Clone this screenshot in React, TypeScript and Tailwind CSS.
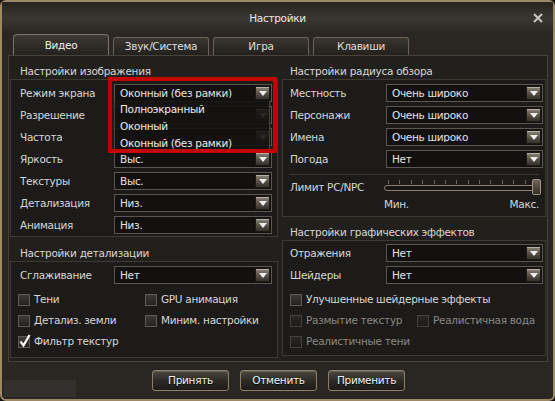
import React from 'react';

function Arrow() {
  return (
    <div className="w-[15px] h-[14px] mr-[1px] flex items-center justify-center border border-[#1c1a17] bg-gradient-to-b from-[#8e887b] via-[#5a5449] to-[#35312a] shadow-[inset_0_1px_0_rgba(255,255,255,0.35)]">
      <svg width="8" height="5" viewBox="0 0 8 5">
        <path d="M0 0 L8 0 L4 5 Z" fill="#eeeeee" />
      </svg>
    </div>
  );
}

function Select({ value, wide }: { value: string; wide?: boolean }) {
  return (
    <div
      className={
        wide
          ? 'w-[158px] h-[18px] flex items-center border border-[#5b574e] bg-[#121110]'
          : 'w-[157px] h-[18px] flex items-center border border-[#5b574e] bg-[#121110]'
      }
    >
      <span className="flex-1 pl-[5px] text-[#e4e4e4] whitespace-nowrap overflow-hidden">{value}</span>
      <Arrow />
    </div>
  );
}

function Row({ label, value, left }: { label: string; value: string; left?: boolean }) {
  return (
    <div className="h-[22px] flex items-center">
      <span className={left ? 'w-[94px] text-[#d6d6d6] whitespace-nowrap' : 'w-[96px] text-[#d6d6d6] whitespace-nowrap'}>{label}</span>
      <Select value={value} wide={left} />
    </div>
  );
}

function Check({ label, checked, disabled }: { label: string; checked?: boolean; disabled?: boolean }) {
  return (
    <div className="flex items-center gap-[4px] whitespace-nowrap">
      <div
        className={
          disabled
            ? 'relative shrink-0 w-[12px] h-[12px] border border-[#45423d] bg-gradient-to-b from-[#2a2825] to-[#1c1b19]'
            : 'relative shrink-0 w-[12px] h-[12px] border border-[#5e5b55] bg-gradient-to-b from-[#3c3a36] to-[#252320]'
        }
      >
        {checked && (
          <svg className="absolute left-[0px] top-[-3px]" width="12" height="14" viewBox="0 0 12 14">
            <path d="M1.5 7.5 L4.5 11.5 L10.5 1" stroke="#ffffff" strokeWidth="2.2" fill="none" />
          </svg>
        )}
      </div>
      <span className={disabled ? 'text-[#8a8883]' : 'text-[#d6d6d6]'}>{label}</span>
    </div>
  );
}

function Tab({ label, active }: { label: string; active?: boolean }) {
  return (
    <div
      className={
        active
          ? 'w-[96px] h-[22px] -mb-px flex items-center justify-center rounded-t-[4px] border border-b-0 border-[#7d7466] bg-gradient-to-b from-[#3c3832] to-[#24221f] text-[#eeeeee]'
          : 'w-[96px] h-[18px] flex items-center justify-center rounded-t-[3px] border border-b-0 border-[#6a6357] bg-gradient-to-b from-[#3a3630] to-[#23211d] text-[#dddddd]'
      }
    >
      {label}
    </div>
  );
}

function Btn({ label }: { label: string }) {
  return (
    <div className="w-[77px] h-[21px] flex items-center justify-center rounded-[3px] border border-[#8d7f67] bg-gradient-to-b from-[#4d4840] via-[#2e2b26] to-[#1e1c19] shadow-[inset_0_1px_0_rgba(255,255,255,0.15)] text-[#f2f2f2] [text-shadow:0_1px_1px_#000]">
      {label}
    </div>
  );
}

export default function App() {
  return (
    <div className="w-[555px] h-[401px] bg-[#15130f] overflow-hidden font-['DejaVu_Sans',sans-serif] text-[10.5px] tracking-[-0.3px] leading-none">
      <div className="relative w-full h-full border-2 border-[#9d8966] rounded-[6px] bg-[#2a2723] flex flex-col">
        {/* title */}
        <div className="relative h-[32px] flex items-center justify-center bg-gradient-to-b from-[#27241f] via-[#3a3630] to-[#2a2723] text-[#e8e8e8]">
          Настройки
          <svg className="absolute right-[10px] top-[11px]" width="10" height="10" viewBox="0 0 10 10">
            <path d="M1 1 L9 9 M9 1 L1 9" stroke="#c9c6c0" strokeWidth="2" />
          </svg>
        </div>

        {/* tabs */}
        <div className="h-[21px] flex items-end gap-[4px] pl-[11px]">
          <Tab label="Видео" active />
          <Tab label="Звук/Система" />
          <Tab label="Игра" />
          <Tab label="Клавиши" />
        </div>

        {/* content */}
        <div className="ml-[6px] w-[540px] h-[307px] border border-[#47423a] bg-[#22201d] flex gap-[4px] pl-[1px]">
          {/* left column */}
          <div className="w-[268px] flex flex-col">
            <div className="h-[23px] flex items-end pb-[3px] pl-[10px] text-[#d6d6d6]">Настройки изображения</div>
            <div className="relative h-[158px] border border-[#3d3a34] bg-[#1c1b19] pt-[2px] pl-[9px]">
              <Row left label="Режим экрана" value="Оконный (без рамки)" />
              <Row left label="Разрешение" value="" />
              <Row left label="Частота" value="" />
              <Row left label="Яркость" value="Выс." />
              <Row left label="Текстуры" value="Выс." />
              <Row left label="Детализация" value="Низ." />
              <Row left label="Анимация" value="Низ." />

              {/* open dropdown */}
              <div className="absolute left-[103px] top-[21px] w-[156px] h-[51px] border-x border-[#4a463f] bg-[#141311]/90 text-[#ececec]">
                <div className="h-[17px] flex items-center pl-[5px]">Полноэкранный</div>
                <div className="h-[17px] flex items-center pl-[5px]">Оконный</div>
                <div className="h-[17px] flex items-center pl-[5px]">Оконный (без рамки)</div>
              </div>
              {/* highlight */}
              <div className="absolute left-[97px] top-[-3px] w-[169px] h-[76px] border-[4px] border-[#c40000] rounded-[1px]" />
            </div>

            <div className="h-[24px] flex items-end pb-[3px] pl-[10px] text-[#d6d6d6]">Настройки детализации</div>
            <div className="h-[97px] border border-[#3d3a34] bg-[#1c1b19] pt-[2px] pl-[9px]">
              <Row left label="Сглаживание" value="Нет" />
              <div className="mt-[3px] -ml-[2px] grid grid-cols-[127px_1fr] auto-rows-[21px] items-center">
                <Check label="Тени" />
                <Check label="GPU анимация" />
                <Check label="Детализ. земли" />
                <Check label="Миним. настройки" />
                <Check label="Фильтр текстур" checked />
              </div>
            </div>
          </div>

          {/* right column */}
          <div className="w-[264px] flex flex-col">
            <div className="h-[23px] flex items-end pb-[3px] pl-[8px] text-[#d6d6d6]">Настройки радиуса обзора</div>
            <div className="h-[138px] border border-[#3d3a34] bg-[#1c1b19] pt-[2px] pl-[7px]">
              <Row label="Местность" value="Очень широко" />
              <Row label="Персонажи" value="Очень широко" />
              <Row label="Имена" value="Очень широко" />
              <Row label="Погода" value="Нет" />
              <div className="mt-[4px] mr-[6px] -ml-[1px] h-px bg-[#3a3731]" />
              <div className="mt-[4px] h-[16px] flex items-center">
                <span className="w-[94px] text-[#d6d6d6] whitespace-nowrap">Лимит PC/NPC</span>
                <div className="relative w-[157px] h-[16px] flex items-center">
                  <div className="absolute left-0 right-0 top-[1px] h-[4px] flex justify-between px-[4px]">
                    {Array.from({ length: 14 }).map((_, i) => (
                      <div key={i} className="w-px h-[4px] bg-[#6e675b]" />
                    ))}
                  </div>
                  <div className="w-full h-[6px] mt-[2px] rounded-full border border-[#8c806b] bg-[#171614]" />
                  <div className="absolute right-0 top-0 w-[9px] h-[16px] rounded-[2px] border border-[#a09480] bg-gradient-to-b from-[#6d665a] to-[#34302a]" />
                </div>
              </div>
              <div className="mt-[3px] h-[12px] flex items-center pl-[94px] pr-[6px] text-[#d6d6d6]">
                <span className="flex-1">Мин.</span>
                <span>Макс.</span>
              </div>
            </div>

            <div className="h-[23px] flex items-end pb-[3px] pl-[8px] text-[#d6d6d6]">Настройки графических эффектов</div>
            <div className="h-[116px] border border-[#3d3a34] bg-[#1c1b19] pt-[1px] pl-[7px]">
              <Row label="Отражения" value="Нет" />
              <Row label="Шейдеры" value="Нет" />
              <div className="mt-[3px] grid grid-cols-[127px_1fr] auto-rows-[21px] items-center">
                <div className="col-span-2">
                  <Check label="Улучшенные шейдерные эффекты" />
                </div>
                <Check label="Размытие текстур" disabled />
                <Check label="Реалистичная вода" disabled />
                <Check label="Реалистичные тени" disabled />
              </div>
            </div>
          </div>
        </div>

        {/* buttons */}
        <div className="mt-[8px] h-[21px] flex gap-[11px] pl-[150px]">
          <Btn label="Принять" />
          <Btn label="Отменить" />
          <Btn label="Применить" />
        </div>

        <div className="absolute left-[2px] bottom-[2px] w-[72px] h-[17px] bg-[#3a3834]/60" />
      </div>
    </div>
  );
}
